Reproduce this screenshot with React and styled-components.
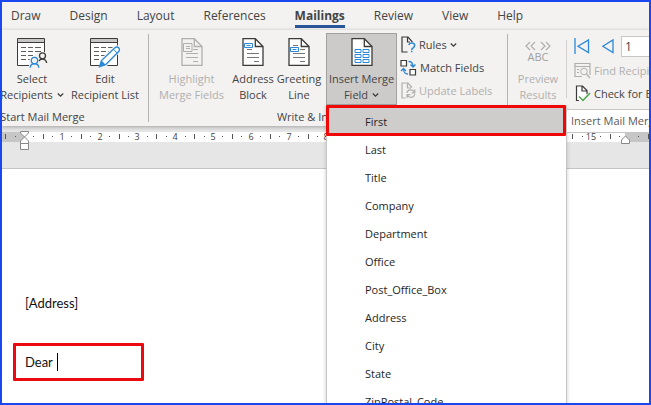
import React from "react";
import styled, { createGlobalStyle, css } from "styled-components";

const Global = createGlobalStyle`
  * { box-sizing: border-box; }
  html, body, #root { height: 100%; }
  body { margin: 0; overflow: hidden; font-family: "Open Sans", "Noto Sans", sans-serif; font-size: 11px; color: #444; }
  button, input { font: inherit; color: inherit; }
  svg { display: block; flex: none; }
`;

const Window = styled.div`
  position: relative;
  display: flex;
  flex-direction: column;
  height: 100vh;
  overflow: hidden;
  border: 2px solid #1a47f0;
  background: #fff;
`;

const Tabs = styled.nav`
  display: flex;
  flex: none;
  height: 28px;
  gap: 29px;
  padding-left: 9px;
  background: #f3f2f1;
`;

const Tab = styled.button`
  flex: none;
  height: 26px;
  padding: 4px 0 0;
  border: 0;
  border-bottom: 3px solid ${(p) => (p.$active ? "#2b579a" : "transparent")};
  background: none;
  font-size: 12px;
  line-height: 20px;
  font-weight: ${(p) => (p.$active ? 700 : 400)};
`;

const Ribbon = styled.section`
  position: relative;
  z-index: 2;
  display: flex;
  flex: none;
  height: 96px;
  background: #f3f2f1;
  box-shadow: 0 1px 4px rgba(0, 0, 0, 0.3);
`;

const Group = styled.div`
  display: flex;
  flex: none;
  flex-direction: column;
  width: ${(p) => p.$width}px;
  margin-left: ${(p) => p.$shift || 0}px;
  padding-top: 3px;
  background: linear-gradient(#b5b3b1, #b5b3b1) right 4px / 1px 88px no-repeat;
`;

const Tools = styled.div`
  display: flex;
  height: 72px;
  padding-right: ${(p) => p.$end || 0}px;
  justify-content: ${(p) => (p.$end ? "flex-end" : "flex-start")};
`;

const GroupName = styled.div`
  height: 21px;
  padding-top: 4px;
  line-height: 16px;
  text-align: center;
`;

const BigButton = styled.button`
  display: flex;
  flex: none;
  flex-direction: column;
  align-items: center;
  gap: 5px;
  width: ${(p) => p.$width}px;
  height: 72px;
  padding: 4px 0 0;
  border: 1px solid ${(p) => (p.$open ? "#a3a1a0" : "transparent")};
  background: ${(p) => (p.$open ? "#cdcbca" : "none")};
  line-height: 16px;
  white-space: nowrap;
  ${(p) => p.disabled && css`color: #b1afad;`}
`;

const BigIcon = styled.span`
  display: flex;
  flex: none;
  justify-content: center;
  height: 28px;
`;

const Label = styled.span`
  display: flex;
  flex-direction: column;
  align-items: center;
`;

const Line = styled.span`
  display: flex;
  align-items: center;
  gap: 4px;
`;

const SmallList = styled.div`
  display: flex;
  flex: none;
  flex-direction: column;
  padding-left: ${(p) => p.$inset}px;
`;

const SmallButton = styled.button`
  display: flex;
  align-items: center;
  gap: 3px;
  height: 23px;
  padding: 0;
  border: 0;
  background: none;
  white-space: nowrap;
  ${(p) => p.disabled && css`color: #b1afad;`}
`;

const Navigator = styled.div`
  display: flex;
  align-items: center;
  gap: 12px;
  height: 26px;
`;

const IconButton = styled.button`
  padding: 0;
  border: 0;
  background: none;
`;

const RecordInput = styled.input`
  width: 60px;
  height: 21px;
  padding: 0 3px;
  margin-left: -5px;
  border: 1px solid #c8c6c4;
  border-radius: 0;
  background: #fff;
  font-size: 12px;
`;

const PreviewPane = styled.div`
  display: flex;
  background: linear-gradient(#d2d0ce, #d2d0ce) 58px 7px / 1px 58px no-repeat;
`;

const MenuAnchor = styled.div`
  position: relative;
  flex: none;
`;

const MenuPanel = styled.div`
  position: absolute;
  top: 72px;
  left: 0;
  width: 241px;
  padding: 2px 1px;
  border: 1px solid #c6c6c6;
  border-top: 0;
  background: #fff;
  box-shadow: 0 2px 4px rgba(0, 0, 0, 0.2);
  color: #262626;
`;

const Menu = styled.ul`
  margin: 0;
  padding: 0;
  list-style: none;
`;

const MenuItem = styled.button`
  display: block;
  width: 100%;
  height: 28px;
  padding: 0 0 0 37px;
  border: 0;
  background: ${(p) => (p.$current ? "#cfcdcc" : "none")};
  text-align: left;
`;

const MenuMark = styled.div`
  position: absolute;
  top: 0;
  left: -1px;
  right: 0;
  height: 31px;
  border: 3px solid #ee0808;
  border-radius: 1px;
  pointer-events: none;
`;

const Tooltip = styled.div`
  position: absolute;
  top: 79px;
  left: 565px;
  height: 24px;
  padding: 0 4px;
  border: 1px solid #c8c6c4;
  border-left: 0;
  background: #fff;
  line-height: 22px;
  white-space: nowrap;
  color: #5c5a58;
`;

const RulerBar = styled.div`
  flex: none;
  height: 43px;
  padding-top: 5px;
  border-bottom: 1px solid #c4c4c4;
  background: #e6e6e6;
`;

const Page = styled.main`
  flex: 1;
  padding: 124px 0 0 11px;
  font-family: Lato, "Open Sans", sans-serif;
  font-size: 13px;
  line-height: 20px;
  color: #111;
`;

const Paragraph = styled.p`
  margin: 0;
  padding-left: 12px;
`;

const MarkedParagraph = styled.p`
  display: flex;
  align-items: center;
  gap: 4px;
  width: 131px;
  height: 38px;
  margin: 30px 0 0;
  padding-left: 9px;
  border: 3px solid #e90b10;
  border-radius: 1px;
`;

const Caret = styled.span`
  width: 1px;
  height: 18px;
  background: #000;
`;

const DARK = "#3b3a39";
const BLUE = "#2b88d8";
const GREY = "#b1afad";

const Chevron = () => (
  <svg width="7" height="6" viewBox="0 0 7 6" fill="none" stroke={DARK} strokeWidth="1.2">
    <path d="M.8 1.5 3.5 4.2 6.2 1.5" />
  </svg>
);

const ListBase = () => (
  <>
    <path d="M.5.5h27v27H.5z" fill="#fff" stroke={DARK} />
    <path d="M1 1h26v3.5H1z" fill="#c8c6c4" />
    <path d="M.5 4.5h27" stroke={DARK} />
    <path d="M4 9.5h5m2 0h5m2 0h6M4 13.5h5m2 0h5m2 0h6M4 17.5h5m2 0h5M4 21.5h5m2 0h3" stroke="#605e5c" />
  </>
);

const SelectIcon = () => (
  <svg width="32" height="30" viewBox="-1 0 32 30" fill="none">
    <ListBase />
    <path d="M12 30v-8l5-4.500 4-3.500h9v16z" fill="#f3f2f1" />
    <g strokeWidth="1.3" stroke={BLUE}>
      <circle cx="17.5" cy="22.5" r="3.2" />
      <path d="M13.2 29.8c.3-5.4 8.3-5.4 8.6 0" />
    </g>
    <g strokeWidth="1.3" stroke={DARK}>
      <circle cx="25.5" cy="17.8" r="3" />
      <path d="M22 23c1.500-3 7-2.500 7.700 2" />
    </g>
  </svg>
);

const EditIcon = () => (
  <svg width="31" height="30" viewBox="0 0 31 30" fill="none">
    <ListBase />
    <path d="m9 29 2-8L25 7l5 1 1 5-15 16z" fill="#f3f2f1" />
    <path
      d="m9.500 28.800 2-6.300L25.200 9.600c2.500-1.700 5.400 1 3.700 3.700L15.600 26.700z"
      fill="#fff"
      stroke={BLUE}
      strokeWidth="1.3"
    />
    <path d="m9.500 28.800 2-6.300 4.100 4.200z" fill={BLUE} />
    <path d="m23.500 11.300 3.700 3.800" stroke={BLUE} />
  </svg>
);

const DocIcon = ({ kind }) => {
  const off = kind === "highlight";
  const ink = off ? GREY : DARK;
  return (
    <svg width="22" height="28" viewBox="0 0 22 28" fill="none">
      <path d="M1 .7h12.300L21 8.500v18.800H1z" fill={off ? "#f3f2f1" : "#fff"} stroke={ink} strokeWidth="1.3" />
      <path d="M13.300.7v7.800H21" stroke={ink} strokeWidth="1.3" />
      {kind === "highlight" && (
        <path
          d="M2.500 5.500h8.500v8H2.500zM5 8.500h4m-4 2h4M12 11.500h5M5 15.500h12M5 19.500h12M12 23.500h5"
          stroke={GREY}
        />
      )}
      {kind === "address" && (
        <>
          <path d="M5 11.500h5M5 15.500h12M5 19.500h12M12 23.500h5" stroke="#777" />
          <path d="M2.500 5.500h8v4h-8zM4.500 7.500h4" stroke={BLUE} />
        </>
      )}
      {kind === "greeting" && (
        <>
          <path d="M5 7.500h5M12 11.500h5M5 15.500h12M5 19.500h12M12 23.500h5" stroke="#777" />
          <path d="M2.500 9.500h8v4h-8zM4.500 11.500h4" stroke={BLUE} />
        </>
      )}
      {kind === "merge" && (
        <path
          d="M4 11.500h6v3H4zm8 0h6v3h-6zM4 16.500h6v3H4zm8 0h6v3h-6zM4 21.500h6v3H4zm8 0h6v3h-6z"
          stroke={BLUE}
        />
      )}
    </svg>
  );
};

const RulesIcon = () => (
  <svg width="16" height="17" viewBox="0 0 16 17" fill="none">
    <path d="M7.500 16H2V1h6l4 4.500V6M7.500 1v5H10" stroke={DARK} strokeWidth="1.2" />
    <path d="M8.800 9c.7-3 5.900-2.500 5.900.5 0 2.300-3 2.300-3 4.400M11.700 14.800v1.500" stroke={BLUE} strokeWidth="1.5" />
  </svg>
);

const MatchIcon = () => (
  <svg width="17" height="17" viewBox="0 0 17 17" fill="none">
    <path d="M1 1.500h5.500V7H1zM10 10.500h5.500V16H10z" fill="#fff" stroke={DARK} strokeWidth="1.2" />
    <path
      d="M8.500 2.500c3 0 4.500 1 4.500 5M10.500 5.500 13 8l2.500-2.500M8 15c-3.500 0-4.500-1.500-4.500-5.500M1 12l2.500-2.500L6 12"
      stroke={BLUE}
      strokeWidth="1.3"
    />
  </svg>
);

const UpdateIcon = () => (
  <svg width="16" height="17" viewBox="0 0 16 17" fill="none" stroke={GREY} strokeWidth="1.2">
    <path d="M5.500 16H2V1h6l4 4.500M7.500 1v5H11" />
    <path d="M7 11c.5-4 6-4 7.500-.5M14.800 7.500v3.300h-3.300M14.800 12c-.8 4-6 4.500-7.500 1M7 16v-3.300h3.300" />
  </svg>
);

const PreviewIcon = () => (
  <svg width="28" height="28" viewBox="0 0 28 28" fill="none">
    <path d="M6 4 2 8l4 4m5-8L7 8l4 4M17 4l4 4-4 4m5-8 4 4-4 4" stroke={GREY} strokeWidth="1.2" />
    <text x="14" y="23" textAnchor="middle" fontSize="11" fill="#a09e9c">
      ABC
    </text>
  </svg>
);

const FirstIcon = () => (
  <svg width="16" height="16" viewBox="0 0 16 16" fill="none" stroke={BLUE} strokeWidth="1.3">
    <path d="M1 0v16M14.500 2v12.500L4 8.200z" />
  </svg>
);

const PreviousIcon = () => (
  <svg width="12" height="16" viewBox="0 0 12 16" fill="none" stroke={BLUE} strokeWidth="1.3">
    <path d="M11 2v12.500L.8 8.200z" />
  </svg>
);

const FindIcon = () => (
  <svg width="17" height="17" viewBox="0 0 17 17" fill="none" stroke={GREY}>
    <path d="M8 14.500H1v-13h15V13M1 4.500h15M3 7.500h2m-2 3h2" strokeWidth="1.2" />
    <circle cx="10" cy="9.5" r="3.3" />
    <path d="m12.500 12 3.500 4" strokeWidth="1.2" />
  </svg>
);

const CheckIcon = () => (
  <svg width="17" height="17" viewBox="0 0 17 17" fill="none">
    <path d="M5 15.500H2.500V1h6l4.500 4.500V9M8 1v5h5" fill="#fff" stroke={DARK} strokeWidth="1.2" />
    <path d="m5 11.500 4 4 7-7.500" stroke="#4ca64c" strokeWidth="1.5" />
  </svg>
);

const CENTIMETRE = 37.8;
const ORIGIN = 22;
const RIGHT_INDENT = 623;

const Ruler = () => {
  const marks = [];
  for (let q = -2; q <= 66; q++) {
    const x = Math.round(ORIGIN + (q * CENTIMETRE) / 4);
    if (q === 0 || q === 64) continue;
    if (q % 4 === 0)
      marks.push(
        <text key={q} x={x} y="9" textAnchor="middle" fontSize="9" fill="#444">
          {q / 4}
        </text>
      );
    else if (q % 2 === 0) marks.push(<path key={q} d={`M${x}.5 3v5`} stroke="#555" />);
    else marks.push(<path key={q} d={`M${x} 5h1v1h-1z`} fill="#555" />);
  }
  return (
    <svg width="100%" height="22" aria-label="Ruler">
      <rect width="100%" height="10" y="1" fill="#c6c6c6" />
      <rect x={ORIGIN} width={RIGHT_INDENT - ORIGIN} height="10" y="1" fill="#fff" />
      {marks}
      <g fill="#fff" stroke="#888">
        <path d="M18.500.5h8V2l-4 4-4-4z" />
        <path d="M18.500 12.500V10l4-4 4 4v2.500zM18.500 12.500h8v6h-8z" />
        <path d="M619.500 12.500V9l4-4 4 4v3.500z" />
      </g>
    </svg>
  );
};

const Big = ({ icon, lines, menu, ...rest }) => (
  <BigButton {...rest}>
    <BigIcon>{icon}</BigIcon>
    <Label>
      <Line>{lines[0]}</Line>
      <Line>
        {lines[1]}
        {menu && <Chevron />}
      </Line>
    </Label>
  </BigButton>
);

const tabs = ["Draw", "Design", "Layout", "References", "Mailings", "Review", "View", "Help"];
const fields = [
  "First",
  "Last",
  "Title",
  "Company",
  "Department",
  "Office",
  "Post_Office_Box",
  "Address",
  "City",
  "State",
  "ZipPostal_Code",
];

export default function App() {
  return (
    <Window>
      <Global />
      <Tabs>
        {tabs.map((name) => (
          <Tab key={name} $active={name === "Mailings"}>
            {name}
          </Tab>
        ))}
      </Tabs>
      <Ribbon>
        <Group $width={213} $shift={-66}>
          <Tools $end={8}>
            <Big $width={74} icon={<SelectIcon />} lines={["Select", "Recipients"]} menu />
            <Big $width={72} icon={<EditIcon />} lines={["Edit", "Recipient List"]} />
          </Tools>
          <GroupName>Start Mail Merge</GroupName>
        </Group>
        <Group $width={359}>
          <Tools>
            <Big $width={85} disabled icon={<DocIcon kind="highlight" />} lines={["Highlight", "Merge Fields"]} />
            <Big $width={38} icon={<DocIcon kind="address" />} lines={["Address", "Block"]} />
            <Big $width={54} icon={<DocIcon kind="greeting" />} lines={["Greeting", "Line"]} />
            <MenuAnchor>
              <Big $width={71} $open icon={<DocIcon kind="merge" />} lines={["Insert Merge", "Field"]} menu />
              <MenuPanel>
                <Menu>
                  {fields.map((name, i) => (
                    <li key={name}>
                      <MenuItem $current={i === 0}>{name}</MenuItem>
                    </li>
                  ))}
                </Menu>
                <MenuMark />
              </MenuPanel>
            </MenuAnchor>
            <SmallList $inset={3}>
              <SmallButton>
                <RulesIcon />
                Rules
                <Chevron />
              </SmallButton>
              <SmallButton>
                <MatchIcon />
                Match Fields
              </SmallButton>
              <SmallButton disabled>
                <UpdateIcon />
                Update Labels
              </SmallButton>
            </SmallList>
          </Tools>
          <GroupName>Write &amp; Insert Fields</GroupName>
        </Group>
        <Group $width={240}>
          <PreviewPane>
            <Big $width={60} disabled icon={<PreviewIcon />} lines={["Preview", "Results"]} />
            <SmallList $inset={6}>
              <Navigator>
                <IconButton aria-label="First record">
                  <FirstIcon />
                </IconButton>
                <IconButton aria-label="Previous record">
                  <PreviousIcon />
                </IconButton>
                <RecordInput aria-label="Record" defaultValue="1" />
              </Navigator>
              <SmallButton disabled>
                <FindIcon />
                Find Recipient
              </SmallButton>
              <SmallButton>
                <CheckIcon />
                Check for Errors
              </SmallButton>
            </SmallList>
          </PreviewPane>
        </Group>
        <Tooltip role="tooltip">Insert Mail Merge Field</Tooltip>
      </Ribbon>
      <RulerBar>
        <Ruler />
      </RulerBar>
      <Page>
        <Paragraph>[Address]</Paragraph>
        <MarkedParagraph>
          Dear
          <Caret />
        </MarkedParagraph>
      </Page>
    </Window>
  );
}
